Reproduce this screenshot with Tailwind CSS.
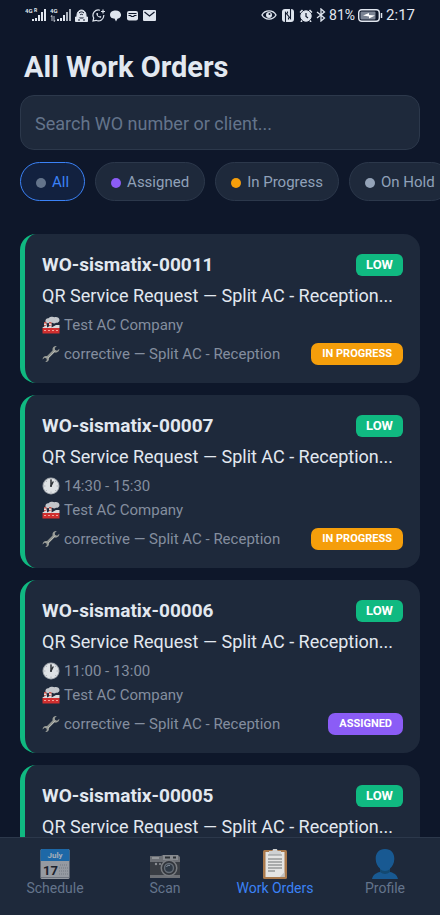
<!DOCTYPE html>
<html lang="en">
<head>
    <meta charset="UTF-8">
    <meta name="viewport" content="width=device-width, initial-scale=1.0">
    <title>All Work Orders</title>
    <script src="https://cdn.jsdelivr.net/npm/@tailwindcss/browser@4"></script>
</head>
<body class="bg-[#0e172a] font-['Roboto','Noto_Sans',sans-serif] text-slate-200">

    <!-- Shared icons -->
    <svg class="hidden" aria-hidden="true">
        <symbol id="factory" viewBox="0 0 18 18">
            <path d="M3.500 6C3 3.500 4.500 2 6.500 2.200 8 .5 11 .3 12.500 1.200c2-.8 5 .3 5 2.800 0 2-1.600 3-3.500 2.800-1 .8-2.600.8-3.500 0-1 .4-2 .2-2.500-.3-1 1-4 1-4.500-.5z" fill="#c3c6cb"/>
            <path d="M2 6h2.500v6H2zM7 6h2.500v6H7z" fill="#c4544d"/>
            <path d="M2 7.500h2.500V9H2zM7 7.500h2.500V9H7z" fill="#e9d8d4"/>
            <path d="M.5 11.500 5 9v2.500L9.500 9v2.500L14 9h3.500v3H.5z" fill="#d9dadc"/>
            <path d="M.5 12h17v5.500H.5z" fill="#d02f2f"/>
            <path d="M2 14h2v1H2zM6 14h2v1H6zM10 14h2v1h-2zM14 14h2v1h-2z" fill="#f0a59a"/>
        </symbol>
        <symbol id="clock" viewBox="0 0 18 18">
            <circle cx="9" cy="9" r="8.500" fill="#9fa4ab"/>
            <circle cx="9" cy="9" r="7.500" fill="#dfe2e5"/>
            <path d="M9 2v1.500M9 14.500V16M2 9h1.500M14.500 9H16M4 4l1 1M13 13l1 1M4 14l1-1M13 5l1-1" stroke="#b4b8be"/>
            <path d="M9 9V3M9 9l2-4" stroke="#30343a" stroke-width="1.500" stroke-linecap="round"/>
            <circle cx="9" cy="9" r="1" fill="#30343a"/>
        </symbol>
        <symbol id="wrench" viewBox="0 0 18 18">
            <path d="M5 13 13 5" stroke="#8f938f" stroke-width="2.600"/>
            <path d="M14.800 1c-2.300-.4-4.600 1.400-4.300 3.800.2 1.600 1.200 2.600 2.700 2.800 2.300.3 4.300-1.600 4.200-3.900l-2.300 2-2-.7-.3-2z" fill="#9a9d98"/>
            <path d="M3.300 17c2.100.4 4-1.300 3.700-3.400-.2-1.500-1.100-2.400-2.500-2.600C2.300 10.700.5 12.400.6 14.600l2-1.900 1.900.7.300 1.900z" fill="#9a9d98"/>
            <path d="m6 13 7-7" stroke="#c0c2bb" stroke-width=".8"/>
        </symbol>
    </svg>

    <div class="flex h-dvh flex-col">

        <!-- Status bar -->
        <div class="flex h-[30px] shrink-0 items-center justify-between px-[25px] text-[15px] text-slate-200">
            <div class="flex items-center gap-1">
                <svg class="h-[14px] w-[21px]" viewBox="0 0 21 14" fill="#dfe5ee">
                    <text x="0" y="5" font-size="6" font-weight="700">4G</text>
                    <text x="9" y="4" font-size="5" font-weight="700">R</text>
                    <path d="M7 11h2v2H7zM10 10h2v3h-2zM13 7h2v6h-2zM16 4h2v9h-2zM19 1h2v12h-2z"/>
                </svg>
                <svg class="h-[14px] w-[21px]" viewBox="0 0 21 14" fill="#dfe5ee">
                    <text x="0" y="5" font-size="6" font-weight="700">4G</text>
                    <path d="M2 8v5M4 8v5M1 9l1-2M5 12l-1 2" stroke="#dfe5ee" stroke-width=".8"/>
                    <path d="M7 11h2v2H7zM10 10h2v3h-2zM13 7h2v6h-2z"/>
                    <path d="M16 4h2v9h-2zM19 1h2v12h-2z" opacity=".75"/>
                </svg>
                <svg class="size-[13px]" viewBox="0 0 13 13" fill="none" stroke="#dfe5ee">
                    <path d="M2 6a4.500 5 0 0 1 9 0v2H2z" fill="#dfe5ee"/>
                    <path d="M4 4c1.500-1.500 3.500-1.500 5 0M5 6c1-1 2-1 3 0" stroke="#0e172a"/>
                    <path d="M.5 8h3l1 2h4l1-2h3v4.500H.5z" fill="#dfe5ee"/>
                    <path d="M3 11h2M8 11h2" stroke="#0e172a"/>
                </svg>
                <svg class="size-[13px]" viewBox="0 0 13 13" fill="none" stroke="#dfe5ee" stroke-width="1.200">
                    <path d="M8 1.200A5.400 5.400 0 0 0 1.700 9L1 12l3-.7A5.400 5.400 0 0 0 11.800 6"/>
                    <path d="M4.500 4c-.6 2.500 2 5 4.500 4.700l.3-1.200L8 7l-.8.600C6.500 7.300 6 6.700 5.700 6l.5-.9L5.600 4z" fill="#dfe5ee" stroke="none"/>
                    <path d="M11 .5v4M9 2.500h4"/>
                </svg>
                <svg class="size-[13px]" viewBox="0 0 13 13" fill="#dfe5ee">
                    <path d="M5.500 1.500C9 1 11.500 2.500 12 5.500c.3 1.500-.6 2.700-1.500 3.500l-2 .8L7 12.500 5.500 9.500C3 9.500 1 8.500 1 5.500c0-2.300 2-3.700 4.500-4z"/>
                </svg>
                <svg class="size-[13px]" viewBox="0 0 13 13">
                    <rect x="1" y="2" width="11" height="9.500" rx="2" fill="#dfe5ee"/>
                    <path d="M2.500 4.500h8M2.500 6.500h2l1 1h2l1-1h2" stroke="#0e172a" stroke-width="1.200" fill="none"/>
                </svg>
                <svg class="size-[13px]" viewBox="0 0 13 13">
                    <rect y="1" width="13" height="11" rx="1" fill="#dfe5ee"/>
                    <path d="m1.500 3 5 4 5-4" stroke="#0e172a" stroke-width="1.200" fill="none"/>
                </svg>
            </div>
            <div class="flex items-center gap-[3px]">
                <svg class="mr-[2px] h-[12px] w-[16px]" viewBox="0 0 16 12" fill="none" stroke="#dfe5ee" stroke-width="1.400">
                    <path d="M1 6c3-5.500 11-5.500 14 0-3 5.500-11 5.500-14 0z"/>
                    <circle cx="8" cy="6" r="3" fill="#dfe5ee" stroke="none"/>
                    <circle cx="8.500" cy="5" r="1" fill="#0e172a" stroke="none"/>
                </svg>
                <svg class="mr-[2px] h-[13px] w-[12px]" viewBox="0 0 12 13">
                    <rect width="12" height="13" rx="3" fill="#dfe5ee"/>
                    <path d="M3.500 13V3.500l5 6V0M5.500 2.500v2M6.500 8.500v2" stroke="#0e172a" stroke-width="1.100" fill="none"/>
                </svg>
                <svg class="h-[13px] w-[14px]" viewBox="0 0 14 13" stroke="#dfe5ee" fill="none">
                    <circle cx="7" cy="7" r="5.200" fill="#dfe5ee"/>
                    <path d="M1 3.500 3.500 1M13 3.500 10.500 1M3 11.500 2 13M11 11.500l1 1.500" stroke-width="1.500"/>
                    <path d="M7 4v3.500l2 1.500" stroke="#0e172a" stroke-width="1.200"/>
                </svg>
                <svg class="h-[14px] w-[10px]" viewBox="0 0 10 14" fill="none" stroke="#dfe5ee" stroke-width="1.300">
                    <path d="M1 4l7.500 6L5 13V1l3.500 3L1 10"/>
                </svg>
                <span class="text-[14px]">81%</span>
                <svg class="h-[13px] w-[25px]" viewBox="0 0 25 13">
                    <rect x=".7" y=".7" width="20.600" height="11.600" rx="3" fill="none" stroke="#dfe5ee" stroke-width="1.400"/>
                    <rect x="2.500" y="2.500" width="15" height="8" rx="1" fill="#7a8393"/>
                    <path d="M5 6.500 11 4v2l6 .5-6 3v-2z" fill="#fff"/>
                    <path d="M23.500 4v5" stroke="#dfe5ee" stroke-width="1.500"/>
                </svg>
                <span>2:17</span>
            </div>
        </div>

        <!-- Header -->
        <header class="shrink-0">
            <h1 class="px-6 pt-[18px] text-[29px] leading-[38px] font-bold">All Work Orders</h1>
            <div class="px-5 pt-[9px]">
                <input type="search" aria-label="Search work orders" placeholder="Search WO number or client..." class="h-[55px] w-full rounded-[14px] border border-[#2c384b] bg-[#1e293b] px-[14px] pt-[2px] text-[18px] text-slate-200 placeholder:text-[#64748b] outline-none">
            </div>
            <div class="flex gap-[10px] overflow-x-auto px-5 pt-3 text-[15px] [scrollbar-width:none]">
                <button class="flex h-[39px] shrink-0 items-center gap-[6px] rounded-full border border-[#3b82f6] bg-[#12213f] px-[15px] pt-[2px] text-[#3b82f6]">
                    <span class="size-[10px] rounded-full bg-[#64748b]"></span>All
                </button>
                <button class="flex h-[39px] shrink-0 items-center gap-[6px] rounded-full border border-[#2c384b] bg-[#1e293b] px-[15px] pt-[2px] text-slate-400">
                    <span class="size-[10px] rounded-full bg-[#8b5cf6]"></span>Assigned
                </button>
                <button class="flex h-[39px] shrink-0 items-center gap-[6px] rounded-full border border-[#2c384b] bg-[#1e293b] px-[15px] pt-[2px] text-slate-400">
                    <span class="size-[10px] rounded-full bg-[#f59e0b]"></span>In Progress
                </button>
                <button class="flex h-[39px] shrink-0 items-center gap-[6px] rounded-full border border-[#2c384b] bg-[#1e293b] px-[15px] pt-[2px] text-slate-400">
                    <span class="size-[10px] rounded-full bg-[#94a3b8]"></span>On Hold
                </button>
            </div>
        </header>

        <!-- Work order list -->
        <main class="mt-[33px] flex min-h-0 flex-1 flex-col gap-3 overflow-y-auto px-5 [scrollbar-width:none]">
            <article class="shrink-0 rounded-2xl border-l-[5px] border-[#10b981] bg-[#1e293b] px-[17px] py-[18px]">
                <div class="flex h-[26px] items-center justify-between">
                    <h2 class="text-[19px] font-bold">WO-sismatix-00011</h2>
                    <span class="rounded-[6px] bg-[#10b981] px-[10px] text-[13px] leading-[22px] font-bold text-white">LOW</span>
                </div>
                <p class="mt-[6px] truncate text-[18px] leading-6">QR Service Request — Split AC - Reception...</p>
                <p class="mt-[5px] flex items-center gap-1 text-[15px] leading-6 text-[#848e9f]"><svg class="size-[18px]"><use href="#factory"/></svg>Test AC Company</p>
                <div class="mt-[6px] flex items-center justify-between leading-[22px]">
                    <p class="flex items-center gap-1 text-[15px] text-[#848e9f]"><svg class="size-[18px]"><use href="#wrench"/></svg>corrective — Split AC - Reception</p>
                    <span class="rounded-[7px] bg-[#f59e0b] px-[11px] text-[11px] font-bold text-white">IN PROGRESS</span>
                </div>
            </article>

            <article class="shrink-0 rounded-2xl border-l-[5px] border-[#10b981] bg-[#1e293b] px-[17px] py-[18px]">
                <div class="flex h-[26px] items-center justify-between">
                    <h2 class="text-[19px] font-bold">WO-sismatix-00007</h2>
                    <span class="rounded-[6px] bg-[#10b981] px-[10px] text-[13px] leading-[22px] font-bold text-white">LOW</span>
                </div>
                <p class="mt-[6px] truncate text-[18px] leading-6">QR Service Request — Split AC - Reception...</p>
                <p class="mt-[5px] flex items-center gap-1 text-[15px] leading-6 text-[#848e9f]"><svg class="size-[18px]"><use href="#clock"/></svg>14:30 - 15:30</p>
                <p class="flex items-center gap-1 text-[15px] leading-6 text-[#848e9f]"><svg class="size-[18px]"><use href="#factory"/></svg>Test AC Company</p>
                <div class="mt-[6px] flex items-center justify-between leading-[22px]">
                    <p class="flex items-center gap-1 text-[15px] text-[#848e9f]"><svg class="size-[18px]"><use href="#wrench"/></svg>corrective — Split AC - Reception</p>
                    <span class="rounded-[7px] bg-[#f59e0b] px-[11px] text-[11px] font-bold text-white">IN PROGRESS</span>
                </div>
            </article>

            <article class="shrink-0 rounded-2xl border-l-[5px] border-[#10b981] bg-[#1e293b] px-[17px] py-[18px]">
                <div class="flex h-[26px] items-center justify-between">
                    <h2 class="text-[19px] font-bold">WO-sismatix-00006</h2>
                    <span class="rounded-[6px] bg-[#10b981] px-[10px] text-[13px] leading-[22px] font-bold text-white">LOW</span>
                </div>
                <p class="mt-[6px] truncate text-[18px] leading-6">QR Service Request — Split AC - Reception...</p>
                <p class="mt-[5px] flex items-center gap-1 text-[15px] leading-6 text-[#848e9f]"><svg class="size-[18px]"><use href="#clock"/></svg>11:00 - 13:00</p>
                <p class="flex items-center gap-1 text-[15px] leading-6 text-[#848e9f]"><svg class="size-[18px]"><use href="#factory"/></svg>Test AC Company</p>
                <div class="mt-[6px] flex items-center justify-between leading-[22px]">
                    <p class="flex items-center gap-1 text-[15px] text-[#848e9f]"><svg class="size-[18px]"><use href="#wrench"/></svg>corrective — Split AC - Reception</p>
                    <span class="rounded-[7px] bg-[#8b5cf6] px-[11px] text-[11px] font-bold text-white">ASSIGNED</span>
                </div>
            </article>

            <article class="shrink-0 rounded-t-2xl border-l-[5px] border-[#10b981] bg-[#1e293b] px-[17px] pt-[18px] pb-1">
                <div class="flex h-[26px] items-center justify-between">
                    <h2 class="text-[19px] font-bold">WO-sismatix-00005</h2>
                    <span class="rounded-[6px] bg-[#10b981] px-[10px] text-[13px] leading-[22px] font-bold text-white">LOW</span>
                </div>
                <p class="mt-[6px] truncate text-[18px] leading-6">QR Service Request — Split AC - Reception...</p>
            </article>
        </main>

        <!-- Bottom navigation -->
        <nav class="grid h-[78px] shrink-0 grid-cols-4 border-t border-[#2c384b] bg-[#1e293b] pt-[11px] text-[14px] leading-[18px] text-[#64748b]">
            <a href="#" class="flex flex-col items-center">
                <svg class="size-[30px] opacity-70" viewBox="0 0 30 30">
                    <rect x=".5" width="29" height="30" rx="1.500" fill="#c8cacd"/>
                    <path d="M.5 1.500Q.5 0 2 0h26q1.500 0 1.500 1.500V12H.5z" fill="#1d83d6"/>
                    <text x="15" y="8.500" text-anchor="middle" font-size="8" font-weight="700" fill="#dfe5ee">July</text>
                    <text x="3" y="26" font-size="13" font-weight="700" fill="#1b2027">17</text>
                    <path d="M19 19h9M19 22h9M19 25h9M20 16h8" stroke="#999da3" stroke-dasharray="1 1"/>
                    <path d="M1 28.500h28" stroke="#92969c"/>
                </svg>
                Schedule
            </a>
            <a href="#" class="flex flex-col items-center">
                <svg class="size-[30px] opacity-70" viewBox="0 0 30 30">
                    <path d="M0 7h11l2-1h15l2 2v21H0z" fill="#8f8f8f"/>
                    <path d="M0 13h30v13H0z" fill="#454648"/>
                    <path d="M13 6h15v5H13z" fill="#b5b5b4"/>
                    <path d="M15 7.500h5v2h-5zM23 7.500h3v2h-3z" fill="#333"/>
                    <path d="M2 8h7v2H2z" fill="#c2c2c0"/>
                    <circle cx="6" cy="15" r="1.200" fill="#bbb"/><circle cx="10" cy="15" r="1" fill="#bbb"/>
                    <circle cx="19" cy="19" r="8.500" fill="#a1a1a0"/>
                    <circle cx="19" cy="19" r="7" fill="#3b3c3e"/>
                    <circle cx="19" cy="19" r="5.200" fill="#82898f"/>
                    <circle cx="19" cy="19" r="3.800" fill="#39424c"/>
                    <path d="M16.500 18c.5-1.500 2-2 3.500-1.500" stroke="#b4c0ca" fill="none"/>
                </svg>
                Scan
            </a>
            <a href="#" class="flex flex-col items-center text-[#3b82f6]">
                <svg class="size-[30px]" viewBox="0 0 30 30">
                    <rect x="3" y="1" width="24" height="29" rx="1.500" fill="#a9794c"/>
                    <path d="M5.500 3h19v25h-19z" fill="#e4e4e3"/>
                    <path d="M20 28l4.500-5v5z" fill="#bfc0c1"/>
                    <path d="M9 2h3.500a2.500 2.500 0 0 1 5 0H21v4H9z" fill="#cfd1d2"/>
                    <path d="M8 6h14" stroke="#8c9093"/>
                    <path d="M8 10h14M8 13h14M8 16h14M8 19h14M8 22h7" stroke="#6f7275" stroke-width="1.200"/>
                </svg>
                Work Orders
            </a>
            <a href="#" class="flex flex-col items-center">
                <svg class="size-[30px] opacity-80" viewBox="0 0 30 30">
                    <path d="M15 0c6 0 9.500 4 9.300 10-.1 4-1.800 7.500-4.300 9.500V23c3.500.8 7 2.500 8 7H2c1-4.500 4.500-6.200 8-7v-3.500C7.500 17.500 5.800 14 5.700 10 5.500 4 9 0 15 0z" fill="#1766a8"/>
                    <path d="M10 20c3 2.500 7 2.500 10 0v3c-3 2.500-7 2.500-10 0z" fill="#11517f"/>
                </svg>
                Profile
            </a>
        </nav>
    </div>
</body>
</html>
